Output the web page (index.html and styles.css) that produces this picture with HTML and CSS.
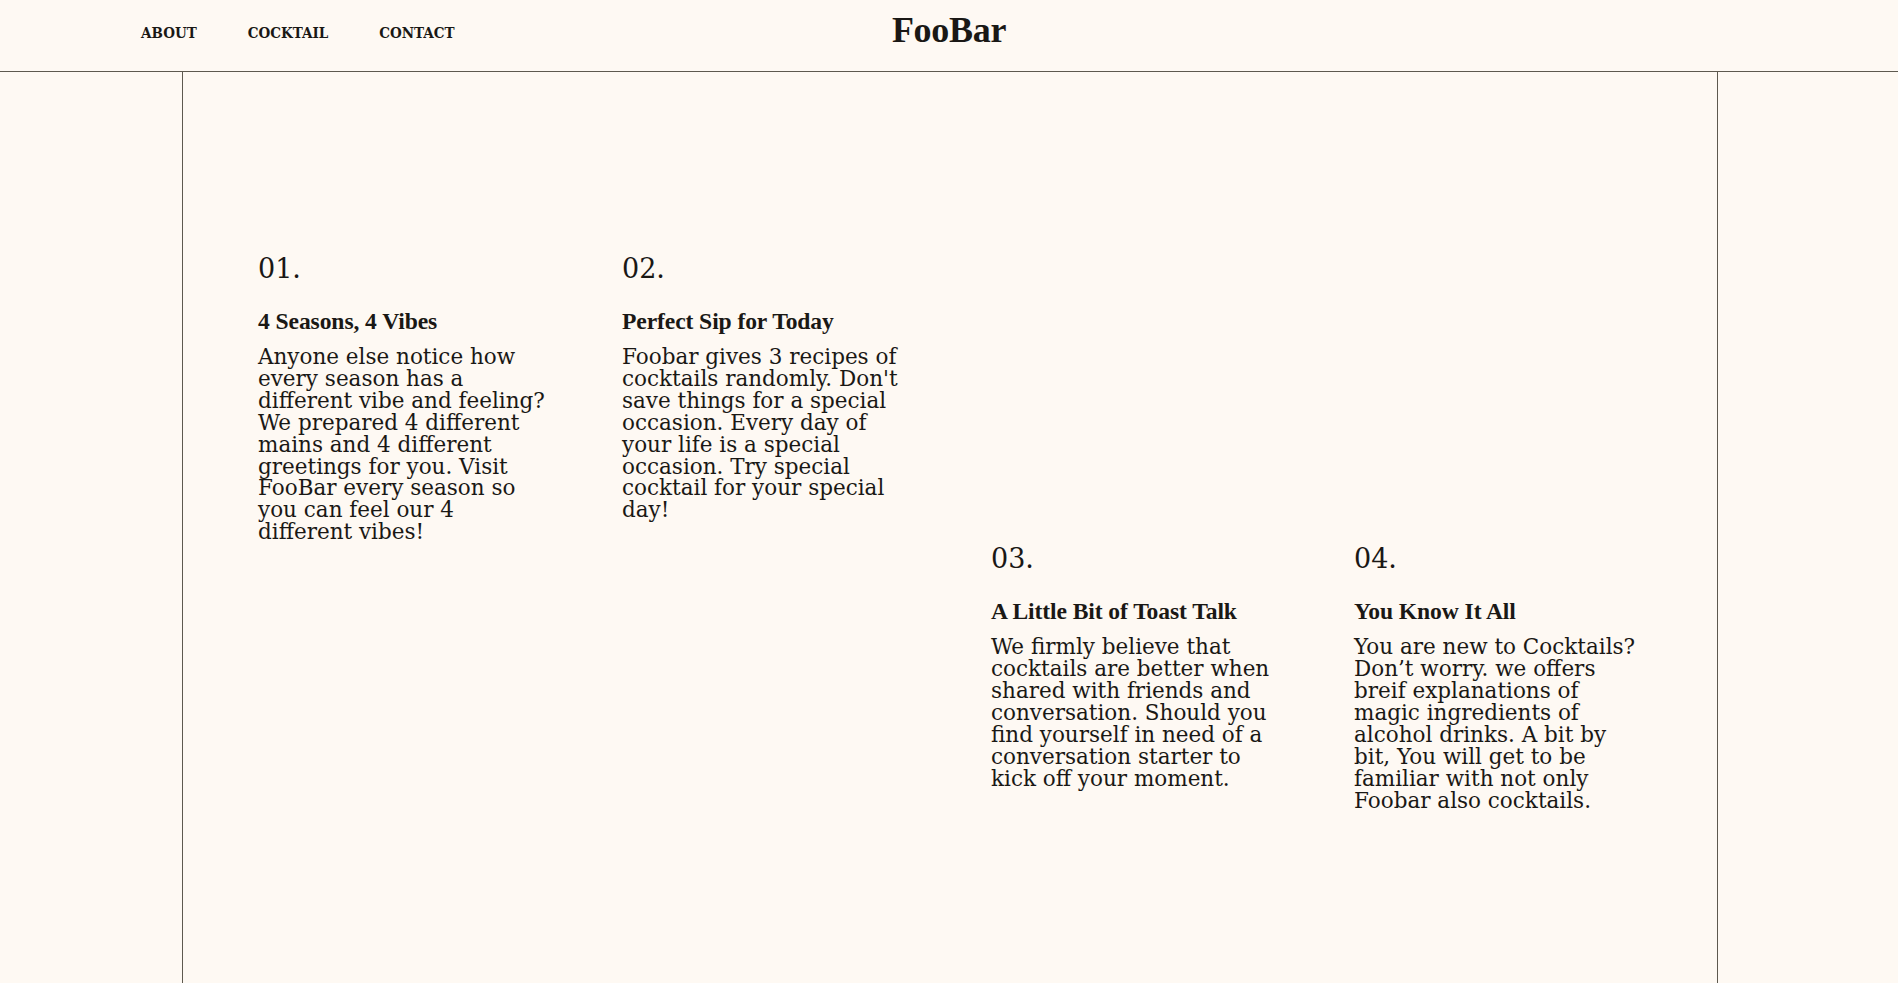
FILE: index.html
```html
<!DOCTYPE html>
<html lang="en">
<head>
<meta charset="utf-8">
<title>FooBar</title>
<link rel="stylesheet" href="styles.css">
</head>
<body>
<header class="site-header">
  <nav class="main-nav">
    <a href="#" class="nav-link">ABOUT</a>
    <a href="#" class="nav-link">COCKTAIL</a>
    <a href="#" class="nav-link">CONTACT</a>
  </nav>
  <div class="logo">FooBar</div>
  <div class="header-spacer"></div>
</header>
<main class="frame">
  <section class="features">
    <article class="feature feature-1">
      <div class="feature-num">01.</div>
      <h2 class="feature-title">4 Seasons, 4 Vibes</h2>
      <p class="feature-text">Anyone else notice how every season has a different vibe and feeling? We prepared 4 different mains and 4 different greetings for you. Visit FooBar every season so you can feel our 4 different vibes!</p>
    </article>
    <article class="feature feature-2">
      <div class="feature-num">02.</div>
      <h2 class="feature-title">Perfect Sip for Today</h2>
      <p class="feature-text">Foobar gives 3 recipes of cocktails randomly. Don't save things for a special occasion. Every day of your life is a special occasion. Try special cocktail for your special day!</p>
    </article>
    <article class="feature feature-3">
      <div class="feature-num">03.</div>
      <h2 class="feature-title">A Little Bit of Toast Talk</h2>
      <p class="feature-text">We firmly believe that cocktails are better when shared with friends and conversation. Should you find yourself in need of a conversation starter to kick off your moment.</p>
    </article>
    <article class="feature feature-4">
      <div class="feature-num">04.</div>
      <h2 class="feature-title">You Know It All</h2>
      <p class="feature-text">You are new to Cocktails? Don’t worry. we offers breif explanations of magic ingredients of alcohol drinks. A bit by bit, You will get to be familiar with not only Foobar also cocktails.</p>
    </article>
  </section>
</main>
</body>
</html>
```
FILE: styles.css
```css
* { box-sizing: border-box; }

html, body {
  margin: 0;
  padding: 0;
  background: #fef9f3;
  color: #1a1815;
}

body {
  font-family: "DejaVu Serif", "Liberation Serif", serif;
  overflow: hidden;
}

.site-header {
  height: 72px;
  border-bottom: 1px solid #5e594f;
  display: grid;
  grid-template-columns: 1fr auto 1fr;
  align-items: start;
  padding-top: 10px;
}

.main-nav {
  display: flex;
  gap: 51px;
  padding-left: 141px;
  margin-top: 13px;
}

.nav-link {
  font-family: "DejaVu Serif Condensed", "DejaVu Serif", serif;
  font-weight: bold;
  font-size: 15px;
  line-height: 20px;
  color: #1a1815;
  text-decoration: none;
}

.logo {
  font-family: "Liberation Serif", serif;
  font-weight: bold;
  font-size: 36px;
  line-height: 40px;
  letter-spacing: -0.3px;
}

.frame {
  width: 1536px;
  margin-left: calc(50% - 767px);
  min-height: calc(100vh - 72px);
  border-left: 1px solid #5e594f;
  border-right: 1px solid #5e594f;
}

.features {
  display: grid;
  grid-template-columns: 364px 369px 363px 1fr;
  grid-template-rows: auto auto;
  padding: 181px 0 0 75px;
}

.feature { width: 290px; }
.feature-1 { grid-column: 1; grid-row: 1; }
.feature-2 { grid-column: 2; grid-row: 1; }
.feature-3 { grid-column: 3; grid-row: 2; }
.feature-4 { grid-column: 4; grid-row: 2; }

.feature-num {
  font-size: 27px;
  line-height: 32px;
}

.feature-title {
  font-family: "Liberation Serif", serif;
  font-weight: bold;
  font-size: 23.6px;
  line-height: 28px;
  margin: 22px 0 0;
  letter-spacing: -0.1px;
}

.feature-text {
  font-size: 21.5px;
  line-height: 21.9px;
  margin: 11px 0 0;
}
```
